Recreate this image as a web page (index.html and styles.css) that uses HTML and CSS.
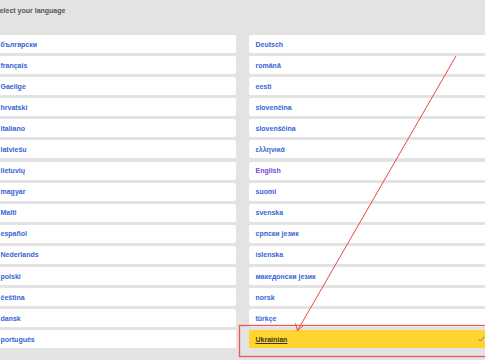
FILE: index.html
```html
<!DOCTYPE html>
<html lang="en">
<head>
    <meta charset="UTF-8">
    <meta name="viewport" content="width=device-width, initial-scale=1.0">
    <title>Select your language</title>
    <link rel="stylesheet" href="styles.css">
</head>
<body>

    <div class="page">
        <h1 class="title">Select your language</h1>

        <!-- Language list, fills column by column -->
        <ul class="lang-grid">
            <li><a class="lang" href="#">български</a></li>
            <li><a class="lang" href="#">français</a></li>
            <li><a class="lang" href="#">Gaeilge</a></li>
            <li><a class="lang" href="#">hrvatski</a></li>
            <li><a class="lang" href="#">italiano</a></li>
            <li><a class="lang" href="#">latviešu</a></li>
            <li><a class="lang" href="#">lietuvių</a></li>
            <li><a class="lang" href="#">magyar</a></li>
            <li><a class="lang" href="#">Malti</a></li>
            <li><a class="lang" href="#">español</a></li>
            <li><a class="lang" href="#">Nederlands</a></li>
            <li><a class="lang" href="#">polski</a></li>
            <li><a class="lang" href="#">čeština</a></li>
            <li><a class="lang" href="#">dansk</a></li>
            <li><a class="lang" href="#">português</a></li>

            <li><a class="lang" href="#">Deutsch</a></li>
            <li><a class="lang" href="#">română</a></li>
            <li><a class="lang" href="#">eesti</a></li>
            <li><a class="lang" href="#">slovenčina</a></li>
            <li><a class="lang" href="#">slovenščina</a></li>
            <li><a class="lang" href="#">ελληνικά</a></li>
            <li><a class="lang visited" href="#">English</a></li>
            <li><a class="lang" href="#">suomi</a></li>
            <li><a class="lang" href="#">svenska</a></li>
            <li><a class="lang" href="#">српски језик</a></li>
            <li><a class="lang" href="#">íslenska</a></li>
            <li><a class="lang" href="#">македонски језик</a></li>
            <li><a class="lang" href="#">norsk</a></li>
            <li><a class="lang" href="#">türkçe</a></li>
            <li>
                <a class="lang selected" href="#">
                    <span class="selected-name">Ukrainian</span>
                    <svg class="check" width="7" height="6" viewBox="0 0 7 6">
                        <polyline points="0.8,3.2 2.6,5 6.2,0.8" fill="none" stroke="#777" stroke-width="1"/>
                    </svg>
                </a>
            </li>
        </ul>

        <!-- Red annotation drawn over the screenshot -->
        <svg class="annot" width="485" height="360" viewBox="0 0 485 360">
            <line x1="456" y1="56" x2="297.5" y2="330.5" stroke="#ee4444" stroke-width="1"/>
            <polyline points="295.5,323.5 297.5,330.5 303,326" fill="none" stroke="#ee4444" stroke-width="1"/>
            <rect x="239.5" y="325.5" width="260" height="31" fill="none" stroke="#ee5555" stroke-width="1.3"/>
        </svg>
    </div>

</body>
</html>
```

FILE: styles.css
```css
/* Language picker */
body {
    margin: 0;
    background-color: #e3e3e3;
    font-family: 'Liberation Sans', Arial, sans-serif;
    overflow: hidden;
}

.page {
    position: relative;
    width: 485px;
    height: 360px;
    overflow: hidden;
}

.title {
    margin: 0;
    padding: 6px 0 0 0;
    margin-left: -5px;
    font-size: 7px;
    line-height: 9px;
    font-weight: bold;
    color: #555;
}

.lang-grid {
    list-style: none;
    margin: 20px 0 0 -6px;
    padding: 0;
    display: grid;
    grid-template-columns: 242px 242px;
    grid-template-rows: repeat(15, 18px);
    grid-auto-flow: column;
    column-gap: 13px;
    row-gap: 3.1px;
}

.lang {
    display: flex;
    align-items: center;
    justify-content: space-between;
    height: 100%;
    box-sizing: border-box;
    padding: 0 6.5px 0 6.5px;
    background-color: white;
    border-radius: 2px;
    color: #3763d8;
    font-size: 7px;
    font-weight: bold;
    text-decoration: none;
}

.lang.visited {
    color: #7d43d9;
}

.lang.selected {
    background-color: #ffd430;
    color: #3a3a1a;
}

.selected-name {
    text-decoration: underline;
}

.annot {
    position: absolute;
    left: 0;
    top: 0;
    pointer-events: none;
}
```
